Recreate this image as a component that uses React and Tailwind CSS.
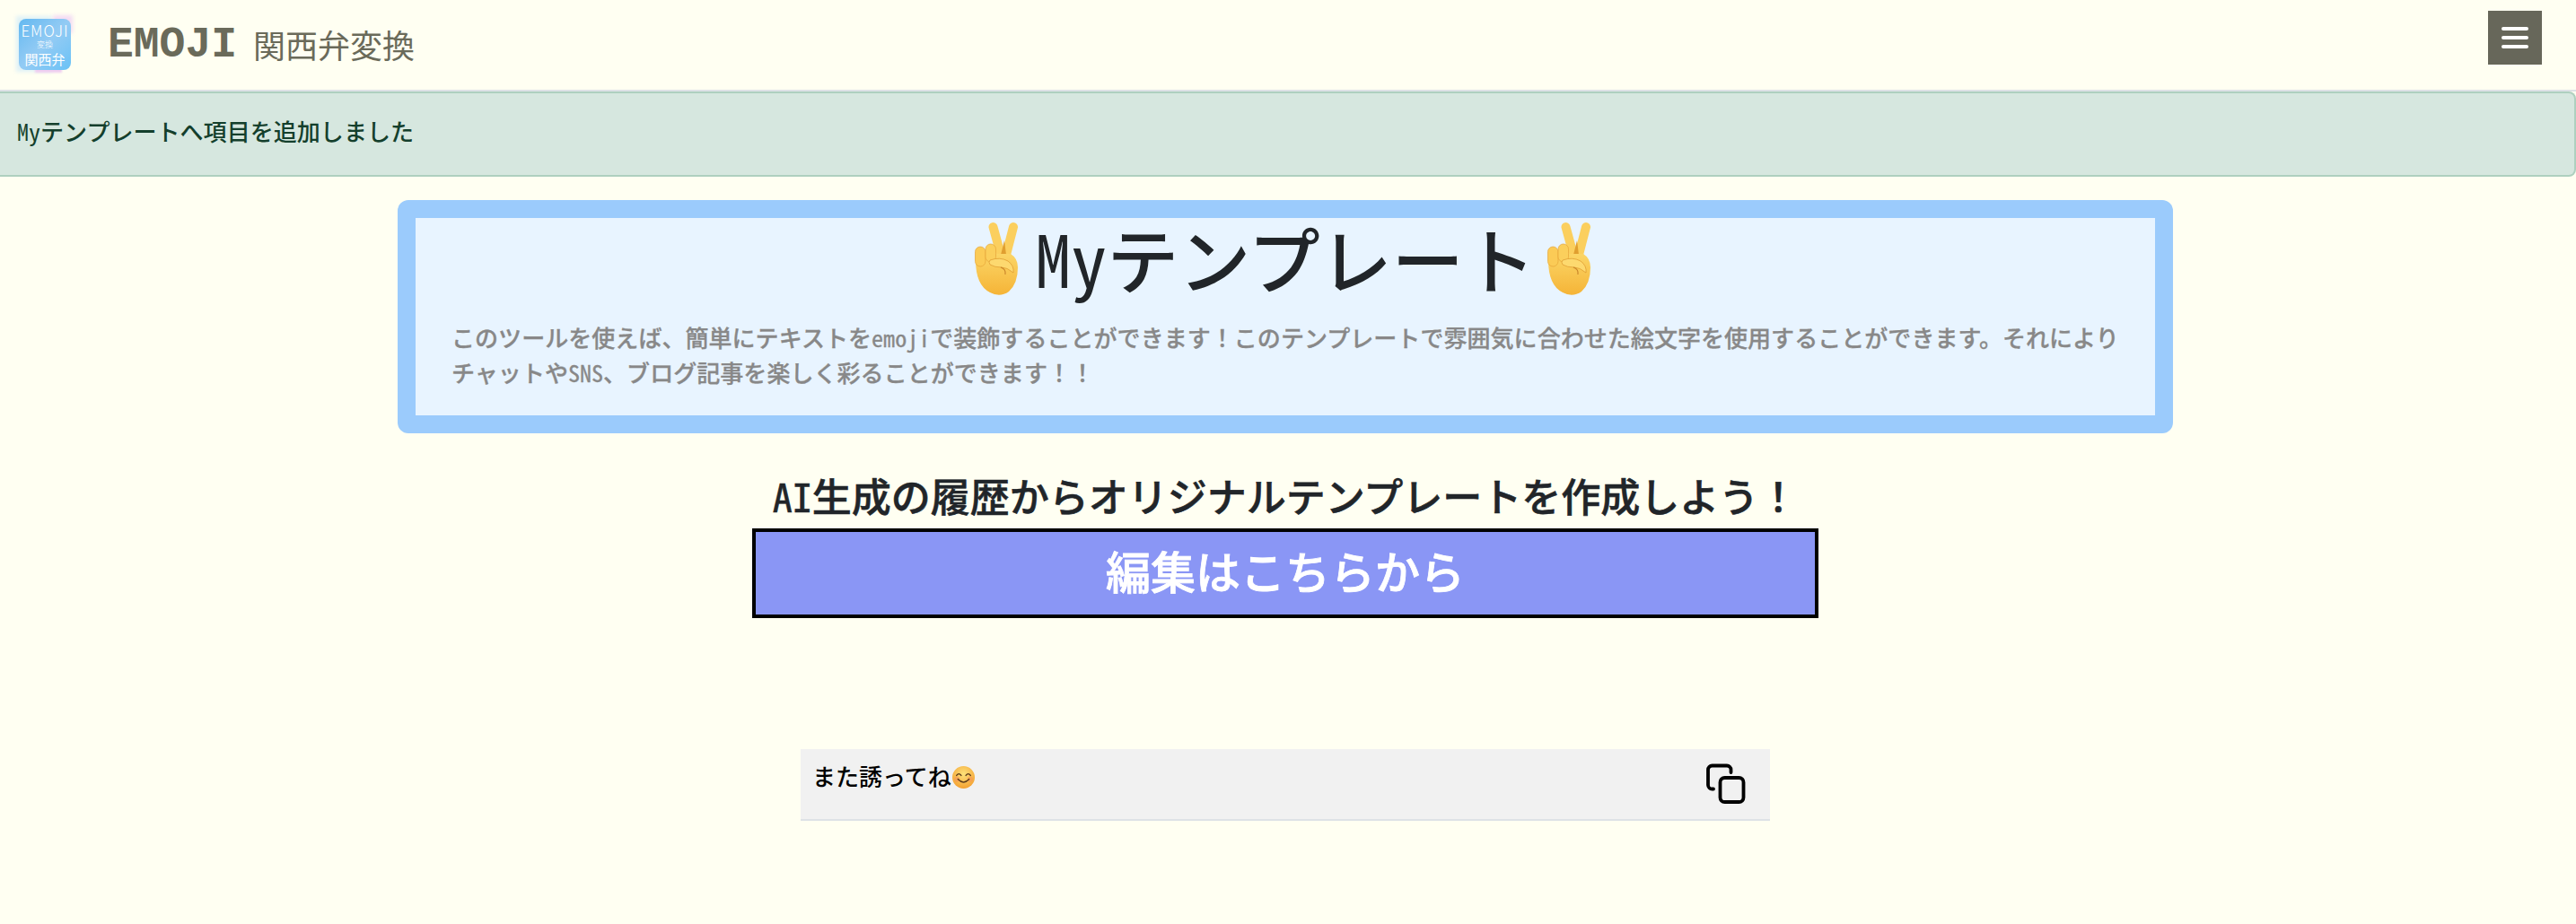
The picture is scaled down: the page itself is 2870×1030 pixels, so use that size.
const mono = "font-['Noto_Sans_Mono_CJK_JP',monospace]";
const sans = "font-['Noto_Sans_CJK_JP',sans-serif]";

function PeaceHand({ id }) {
  return (
    <svg viewBox="-3 0 80 90" className="-mt-[12px] h-[90px] w-[80px] shrink-0" aria-hidden="true">
      <defs>
        <linearGradient id={id} x1="0" y1="0" x2="0" y2="1">
          <stop offset="0" stopColor="#fbd566" />
          <stop offset="1" stopColor="#f5b437" />
        </linearGradient>
      </defs>
      <g stroke="#fbcf5e" strokeWidth="10" strokeLinecap="round" fill="none">
        <path d="M30.5 13 L39 44" />
        <path d="M53 13 L45 44" />
      </g>
      <path d="M39 44 L43 28 L45 44 Z" fill="#e09f30" />
      <path d="M11 50 Q11 78 27 86 Q38 92 48 85 Q58 76 58 58 Q58 48 50 43 L20 43 Q13 44 11 50 Z" fill={`url(#${id})`} />
      <rect x="10.5" y="35" width="11.5" height="22" rx="5.7" fill="#fbcb56" stroke="#e5a336" strokeWidth="0.7" />
      <rect x="22" y="32" width="11.5" height="20" rx="5.7" fill="#fbcf5c" stroke="#e5a336" strokeWidth="0.7" />
      <path d="M27 50 Q38 46 47 51 Q54 56 53 64 Q46 58 40 58 Q32 58 27 55 Q25 52 27 50 Z" fill="#fdd96f" stroke="#dc982d" strokeWidth="0.7" />
      <path d="M39 58 Q45 60 44 66" stroke="#c9852a" strokeWidth="1.1" fill="none" />
    </svg>
  );
}

function Smile() {
  return (
    <svg viewBox="0 0 24 24" className="ml-[1px] inline-block h-[25px] w-[25px] align-[-3px]" aria-hidden="true">
      <defs>
        <radialGradient id="face" cx="50%" cy="35%" r="70%">
          <stop offset="0" stopColor="#fde27a" />
          <stop offset="1" stopColor="#f39c2c" />
        </radialGradient>
      </defs>
      <circle cx="12" cy="12" r="12" fill="url(#face)" />
      <circle cx="5" cy="14" r="3" fill="#f58a5a" opacity="0.45" />
      <circle cx="19" cy="14" r="3" fill="#f58a5a" opacity="0.45" />
      <path d="M4.5 10 Q7 6.5 9.5 10 M14.5 10 Q17 6.5 19.5 10" stroke="#5b3a1a" strokeWidth="1.3" fill="none" strokeLinecap="round" />
      <path d="M6 14 Q12 20.5 18 14" stroke="#5b3a1a" strokeWidth="1.3" fill="none" strokeLinecap="round" />
    </svg>
  );
}

function Logo() {
  return (
    <div className="relative h-[57px] w-[58px] shrink-0">
      <div className="absolute -left-[3px] -top-[3px] h-[62px] w-[40px] bg-[#dff1f6] blur-[2px]" />
      <div className="absolute -top-[4px] right-[-2px] h-[20px] w-[22px] bg-[#f3dcf3] blur-[2px]" />
      <div className="absolute -bottom-[3px] left-[18px] h-[14px] w-[30px] bg-[#efcdf0] blur-[1px]" />
      <div className={`relative flex h-full w-full flex-col items-center justify-center rounded-[8px] bg-gradient-to-br from-[#62b8f0] via-[#93cbf4] to-[#69c2f6] ${sans} font-light leading-none text-white`}>
        <span className="text-[17px] leading-[20px] tracking-[1px]">EMOJI</span>
        <span className="text-[9px] leading-[12px]">変換</span>
        <span className="text-[15px] leading-[20px] font-normal">関西弁</span>
      </div>
    </div>
  );
}

function CopyIcon() {
  return (
    <svg viewBox="0 0 44 46" className="h-[46px] w-[44px]" fill="none" stroke="#000" strokeWidth="3.8" strokeLinecap="round" aria-hidden="true">
      <rect x="15.5" y="16" width="26" height="27" rx="5" />
      <path d="M27.5 10 V7 a4.5 4.5 0 0 0 -4.5 -4.5 H6.5 a4.5 4.5 0 0 0 -4.5 4.5 V24 a4.5 4.5 0 0 0 4.5 4.5 H8" />
    </svg>
  );
}

export default function App() {
  return (
    <div className={`min-h-[1030px] bg-[#fffff2] ${sans}`}>
      <header className="flex h-[102px] items-start justify-between border-b-2 border-[#dee2e6] pl-[21px] pr-[38px]">
        <div className="mt-[20px] flex items-center">
          <Logo />
          <span className="ml-[41px] mt-[1px] font-['Liberation_Mono',monospace] text-[48px] font-bold leading-[58px] text-[#6a6a5a]">EMOJI</span>
          <span className="ml-[18px] -mt-[1px] text-[36px] font-normal leading-[58px] text-[#6a6a5a]">関西弁変換</span>
        </div>
        <button type="button" className="mt-[12px] flex h-[60px] w-[60px] flex-col items-center justify-center gap-[6px] bg-[#67675a]" aria-label="menu">
          <span className="h-[4px] w-[30px] rounded-full bg-white" />
          <span className="h-[4px] w-[30px] rounded-full bg-white" />
          <span className="h-[4px] w-[30px] rounded-full bg-white" />
        </button>
      </header>

      <div className="flex h-[95px] items-center rounded-r-[8px] border-y-2 border-r-2 border-[#aed0bf] bg-[#d6e7df] pb-[5px] pl-[19px] text-[26.05px] font-medium text-[#143f2c]">
        <span className={mono}>My</span>テンプレートへ項目を追加しました
      </div>

      <main className="flex flex-col items-center pr-[6px] pt-[26px]">
        <section className="w-[1978px] rounded-[12px] bg-[#9bcbfc] p-[20px]">
          <div className="bg-[#e8f4ff] px-[40px] pb-[28px] text-center">
            <h1 className="mb-[18px] flex h-[96px] items-center justify-center text-[80px] font-medium leading-[96px] text-[#212529]">
              <PeaceHand id="hand-a" />
              <span className="pb-[10px]">
                <span className={mono}>My</span>テンプレート
              </span>
              <PeaceHand id="hand-b" />
            </h1>
            <p className="-mr-[10px] text-left text-[26.05px] font-medium leading-[39px] text-[#888888] [-webkit-text-stroke:0.3px_#888888]">
              このツールを使えば、簡単にテキストを<span className={mono}>emoji</span>で装飾することができます！このテンプレートで雰囲気に合わせた絵文字を使用することができます。それによりチャットや<span className={mono}>SNS</span>、ブログ記事を楽しく彩ることができます！！
            </p>
          </div>
        </section>

        <h2 className="mt-[43px] text-[44px] font-medium leading-[53px] text-[#212529] [-webkit-text-stroke:0.6px_#212529]">
          <span className={mono}>AI</span>生成の履歴からオリジナルテンプレートを作成しよう！
        </h2>

        <button type="button" className="mt-[10px] h-[100px] w-[1188px] border-[4px] border-black bg-[#8a96f5] pb-[8px] text-[50px] font-medium text-white [-webkit-text-stroke:0.8px_#ffffff]">
          編集はこちらから
        </button>

        <div className="mt-[146px] flex h-[80px] w-[1080px] items-start justify-between border-b-2 border-[#dee2e6] bg-[#f1f1f1] pl-[13px] pr-[27px]">
          <p className="pt-[10px] text-[26px] font-medium leading-[39px] text-black">
            また誘ってね<Smile />
          </p>
          <div className="pt-[16px]">
            <CopyIcon />
          </div>
        </div>
      </main>
    </div>
  );
}
